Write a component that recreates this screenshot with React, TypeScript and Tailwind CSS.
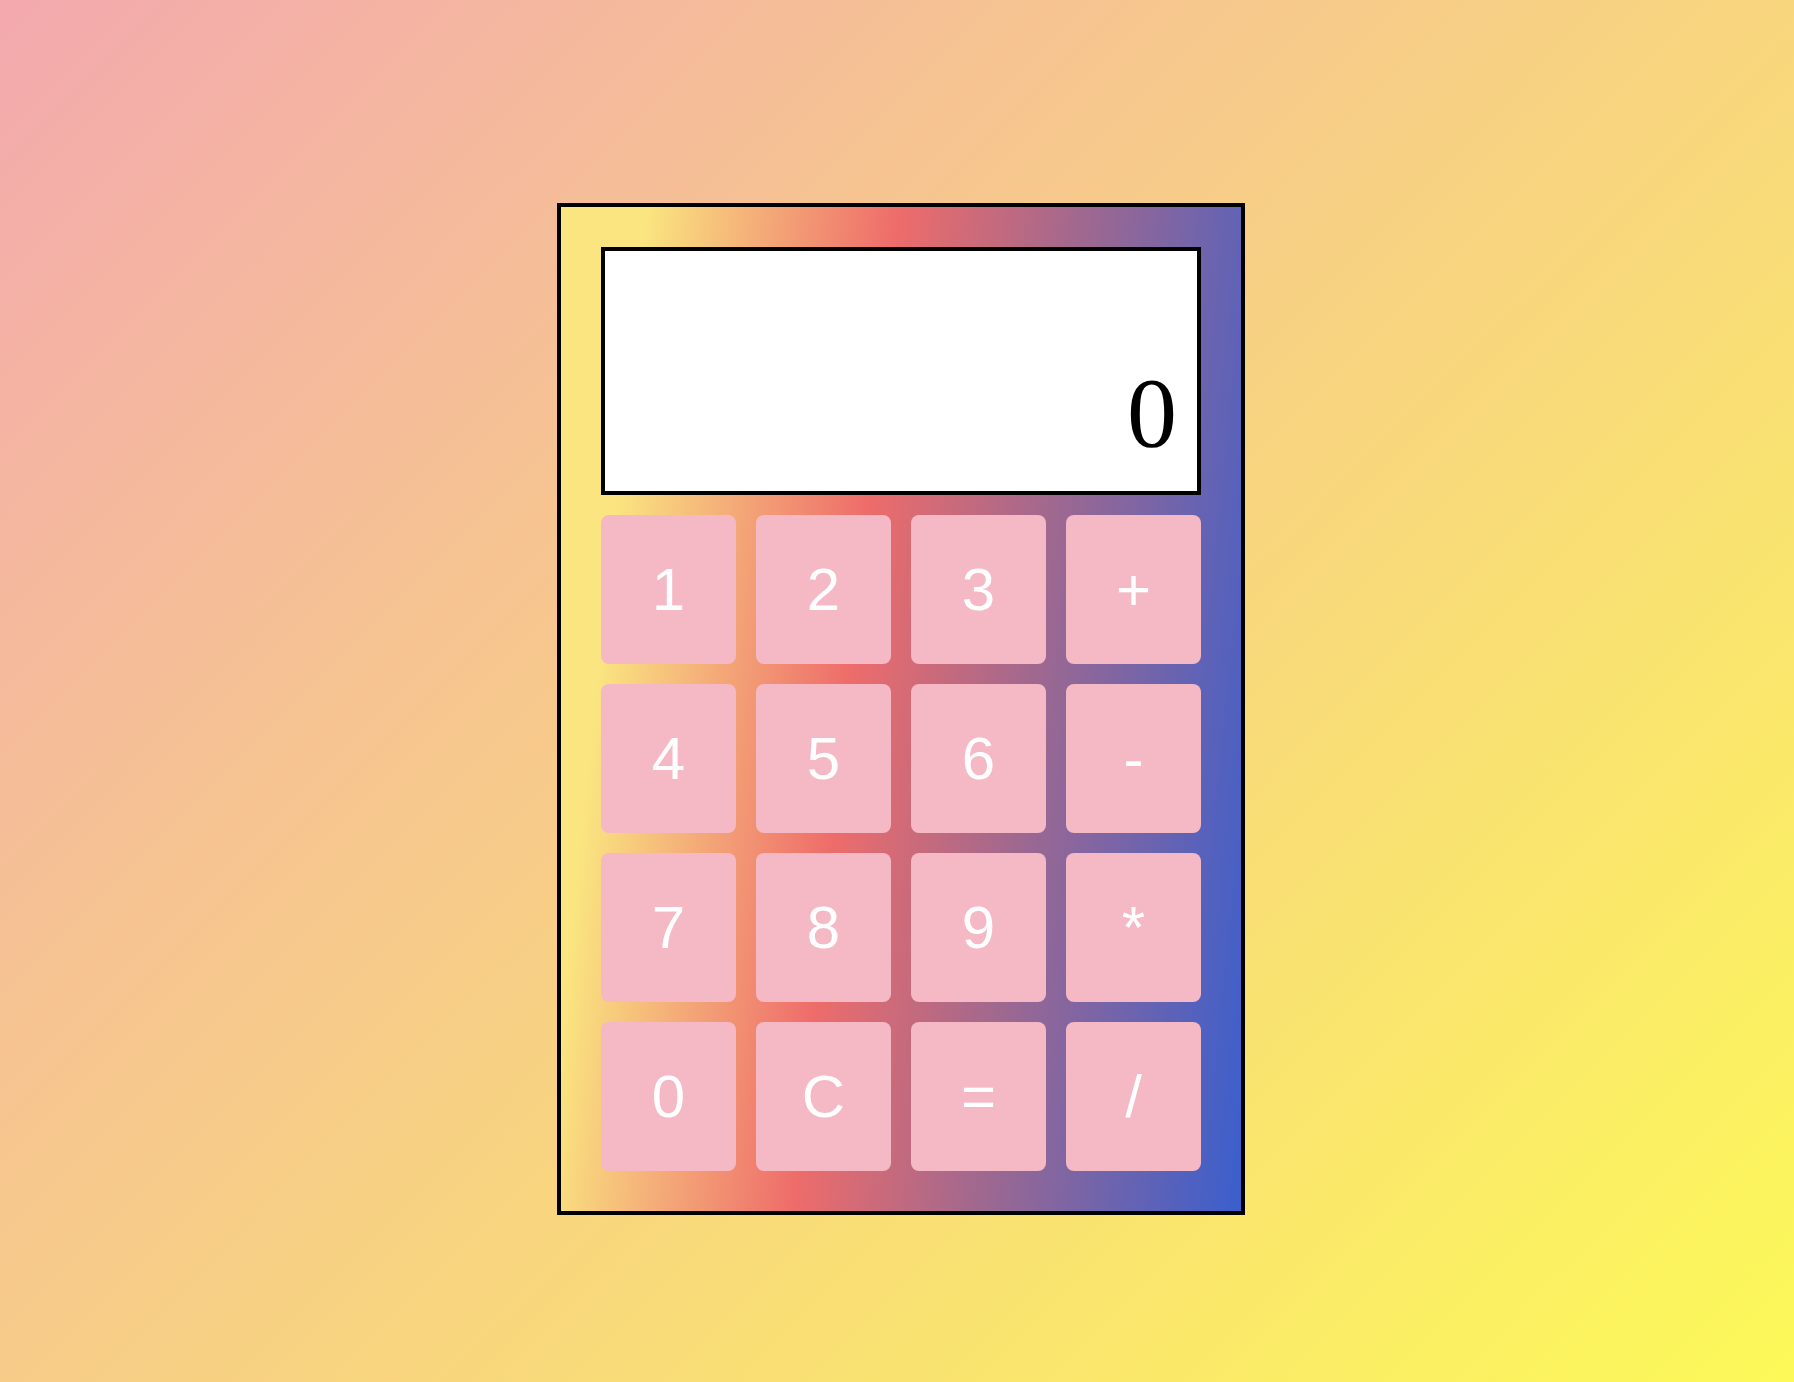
import React from "react";

const keys = ["1", "2", "3", "+", "4", "5", "6", "-", "7", "8", "9", "*", "0", "C", "=", "/"];

export default function App() {
  return (
    <div className="min-h-[1382px] w-full bg-[linear-gradient(135deg,#f3a9ae_0%,#fcf958_100%)] flex flex-col items-center pt-[203px] pl-[8px]">
      <div className="w-[688px] border-4 border-black p-[40px] bg-[linear-gradient(96deg,#fae580_11%,#f4aa78_26%,#ee6c6a_43%,#9e6890_67%,#3a5fcd_100%)]">
        <div className="h-[248px] border-4 border-black bg-white flex items-end justify-end pr-[20px] pb-[3px]">
          <span className="text-[100px] leading-normal text-black" style={{ fontFamily: '"Liberation Serif", serif' }}>
            0
          </span>
        </div>
        <div className="mt-[20px] grid grid-cols-4 gap-[20px]">
          {keys.map((k) => (
            <button
              key={k}
              className="h-[149px] rounded-lg bg-[#f4b9c4] text-white text-[60px] flex items-center justify-center"
              style={{ fontFamily: '"Liberation Sans", Arial, sans-serif' }}
            >
              {k}
            </button>
          ))}
        </div>
      </div>
    </div>
  );
}
